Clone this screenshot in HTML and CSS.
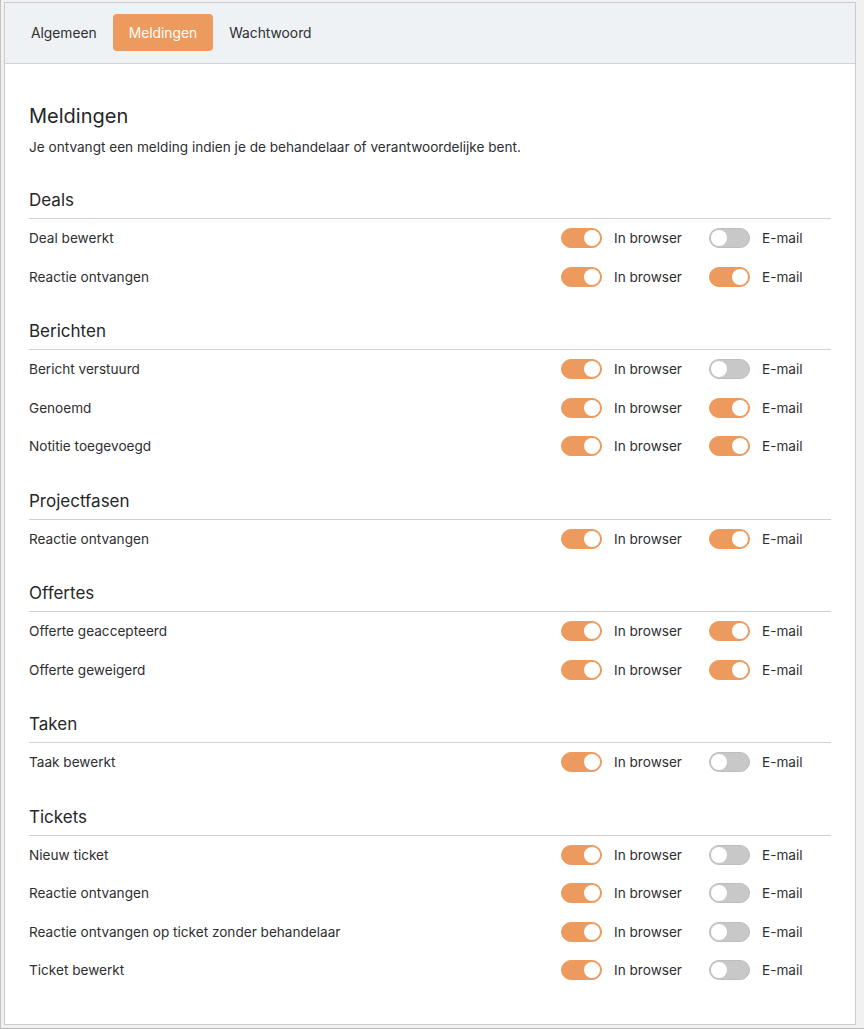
FILE: index.html
```html
<!DOCTYPE html>
<html lang="nl">
<head>
<meta charset="utf-8">
<title>Meldingen</title>
<link rel="stylesheet" href="styles.css">
</head>
<body>
<div class="card">
  <nav class="tabs">
    <span class="tab">Algemeen</span>
    <span class="tab active">Meldingen</span>
    <span class="tab">Wachtwoord</span>
  </nav>
  <main class="content">
    <h1 class="title">Meldingen</h1>
    <p class="intro">Je ontvangt een melding indien je de behandelaar of verantwoordelijke bent.</p>

    <section class="group">
      <h2 class="group-title">Deals</h2>
      <div class="row"><span class="label">Deal bewerkt</span><div class="opts"><span class="opt"><span class="toggle on"></span>In browser</span><span class="opt"><span class="toggle"></span>E-mail</span></div></div>
      <div class="row"><span class="label">Reactie ontvangen</span><div class="opts"><span class="opt"><span class="toggle on"></span>In browser</span><span class="opt"><span class="toggle on"></span>E-mail</span></div></div>
    </section>

    <section class="group">
      <h2 class="group-title">Berichten</h2>
      <div class="row"><span class="label">Bericht verstuurd</span><div class="opts"><span class="opt"><span class="toggle on"></span>In browser</span><span class="opt"><span class="toggle"></span>E-mail</span></div></div>
      <div class="row"><span class="label">Genoemd</span><div class="opts"><span class="opt"><span class="toggle on"></span>In browser</span><span class="opt"><span class="toggle on"></span>E-mail</span></div></div>
      <div class="row"><span class="label">Notitie toegevoegd</span><div class="opts"><span class="opt"><span class="toggle on"></span>In browser</span><span class="opt"><span class="toggle on"></span>E-mail</span></div></div>
    </section>

    <section class="group">
      <h2 class="group-title">Projectfasen</h2>
      <div class="row"><span class="label">Reactie ontvangen</span><div class="opts"><span class="opt"><span class="toggle on"></span>In browser</span><span class="opt"><span class="toggle on"></span>E-mail</span></div></div>
    </section>

    <section class="group">
      <h2 class="group-title">Offertes</h2>
      <div class="row"><span class="label">Offerte geaccepteerd</span><div class="opts"><span class="opt"><span class="toggle on"></span>In browser</span><span class="opt"><span class="toggle on"></span>E-mail</span></div></div>
      <div class="row"><span class="label">Offerte geweigerd</span><div class="opts"><span class="opt"><span class="toggle on"></span>In browser</span><span class="opt"><span class="toggle on"></span>E-mail</span></div></div>
    </section>

    <section class="group">
      <h2 class="group-title">Taken</h2>
      <div class="row"><span class="label">Taak bewerkt</span><div class="opts"><span class="opt"><span class="toggle on"></span>In browser</span><span class="opt"><span class="toggle"></span>E-mail</span></div></div>
    </section>

    <section class="group">
      <h2 class="group-title">Tickets</h2>
      <div class="row"><span class="label">Nieuw ticket</span><div class="opts"><span class="opt"><span class="toggle on"></span>In browser</span><span class="opt"><span class="toggle"></span>E-mail</span></div></div>
      <div class="row"><span class="label">Reactie ontvangen</span><div class="opts"><span class="opt"><span class="toggle on"></span>In browser</span><span class="opt"><span class="toggle"></span>E-mail</span></div></div>
      <div class="row"><span class="label">Reactie ontvangen op ticket zonder behandelaar</span><div class="opts"><span class="opt"><span class="toggle on"></span>In browser</span><span class="opt"><span class="toggle"></span>E-mail</span></div></div>
      <div class="row"><span class="label">Ticket bewerkt</span><div class="opts"><span class="opt"><span class="toggle on"></span>In browser</span><span class="opt"><span class="toggle"></span>E-mail</span></div></div>
    </section>
  </main>
</div>
</body>
</html>
```

FILE: styles.css
```css
* { box-sizing: border-box; }

html, body { height: 100%; }

body {
  margin: 0;
  padding: 2px 8px 3px 3px;
  background: #f1f1f1;
  border-left: 1px solid #c4c4c4;
  border-bottom: 1px solid #b8b8b8;
  font-family: Inter, "Noto Sans", "Liberation Sans", sans-serif;
  font-size: 13.6px;
  color: #2e2e30;
}

.card {
  height: 100%;
  background: #fff;
  border: 1px solid #c9ccd1;
  display: flex;
  flex-direction: column;
}

.tabs {
  display: flex;
  align-items: center;
  height: 61px;
  padding: 0 0 1px 10px;
  background: #eef2f5;
  border-bottom: 1px solid #cfd3d8;
}

.tab {
  display: flex;
  align-items: center;
  height: 37px;
  padding: 0 16px;
  border-radius: 4px;
  color: #2e2e30;
  font-size: 13.8px;
  white-space: nowrap;
}

.tab.active {
  background: #ec9a5d;
  color: #fff;
}

.content {
  padding: 38px 24px 0 24px;
}

.title {
  margin: 0;
  font-size: 20px;
  line-height: 28px;
  font-weight: 400;
  color: #262628;
}

.intro {
  margin: 7px 0 0 0;
  font-size: 13.6px;
  line-height: 20px;
}

.group { margin-top: 31px; }
.group + .group { margin-top: 23px; }

.group-title {
  margin: 0;
  padding-bottom: 6px;
  font-size: 17px;
  line-height: 24px;
  font-weight: 400;
  color: #262628;
  border-bottom: 1px solid #cfd1d4;
}

.row {
  display: flex;
  align-items: center;
  justify-content: space-between;
  height: 38.5px;
}

.label {
  font-size: 13.6px;
  white-space: nowrap;
}

.opts {
  display: flex;
  gap: 26px;
}

.opt {
  display: flex;
  align-items: center;
  width: 122px;
  font-size: 13.6px;
  white-space: nowrap;
}

.toggle {
  position: relative;
  flex: none;
  width: 41px;
  height: 20px;
  margin-right: 12px;
  border-radius: 10px;
  background: #c8c8c8;
  border: 1px solid #bdbdbd;
}

.toggle::after {
  content: "";
  position: absolute;
  top: 1px;
  left: 1px;
  width: 16px;
  height: 16px;
  border-radius: 50%;
  background: #fff;
}

.toggle.on {
  background: #ec9a5d;
  border-color: #ec9a5d;
}

.toggle.on::after {
  left: auto;
  right: 1px;
}
```
